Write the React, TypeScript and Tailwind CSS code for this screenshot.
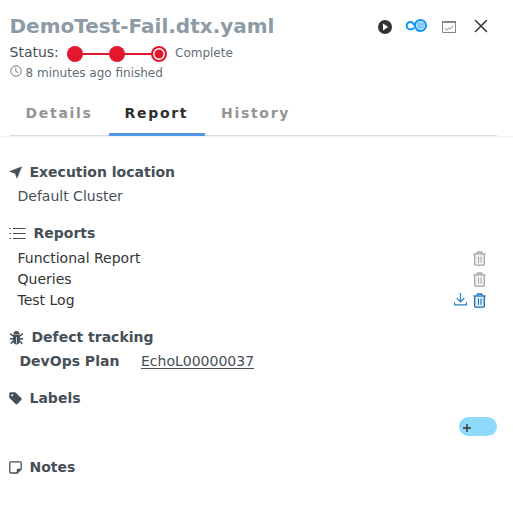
import type { ReactNode } from "react";

function Heading({ icon, children, className }: { icon: ReactNode; children: ReactNode; className: string }) {
  return (
    <h2 className={`flex h-6 items-center text-sm font-bold ${className}`}>
      {icon}
      <span>{children}</span>
    </h2>
  );
}

function Trash({ className }: { className: string }) {
  return (
    <svg className={`mt-px h-[15px] w-[13px] shrink-0 ${className}`} viewBox="0 0 13 15" fill="none" stroke="currentColor">
      <path d="M2 3.5h9V13.5H2z" fill="currentColor" fillOpacity=".12" stroke="none" />
      <path d="M0.3 3h12.4" strokeWidth="1.3" />
      <path d="M4 2.8V2Q4 1 5 1h3Q9 1 9 2v.8" strokeWidth="1.3" />
      <path d="M1.7 3.4V13q0 1.2 1.2 1.2h7.2q1.2 0 1.2-1.2V3.4" strokeWidth="1.3" />
      <path d="M5.5 5.5v6.3M8 5.5v6.3" strokeWidth="1" />
    </svg>
  );
}

function ReportRow({ name, active = false }: { name: string; active?: boolean }) {
  return (
    <li className="flex h-[21px] items-center pl-[17.5px] pr-[27px] text-[#333]">
      <span className="flex-1">{name}</span>
      {active && (
        <svg className="mr-1.5 -mt-px h-[13px] w-[13px] text-[#2782c5]" viewBox="0 0 13 13" fill="none" stroke="currentColor" strokeWidth="1.2">
          <path d="M6.5 0v8.6M2.7 5l3.8 3.8L10.3 5M.6 9.3v2.5h11.8V9.3" />
        </svg>
      )}
      <Trash className={active ? "text-[#136bb6]" : "text-[#a0a4a8]"} />
    </li>
  );
}

export default function App() {
  return (
    <main className="h-[516px] w-[513px] overflow-hidden bg-white font-['DejaVu_Sans',sans-serif] text-sm text-[#464f57]">
      <header className="pl-[10px]">
        <div className="flex h-[42px] items-center pt-[10px]">
          <h1 className="-ml-[0.5px] w-[367.5px] whitespace-nowrap pt-px text-[20px] font-bold text-[#8c9ba5]">DemoTest-Fail.dtx.yaml</h1>
          <svg className="mt-0.5 h-[16px] w-[16px]" viewBox="0 0 16 16">
            <circle cx="8" cy="8" r="7" fill="#333" />
            <path d="M6 4.6v6.8L11.2 8z" fill="#fff" />
          </svg>
          <svg className="mb-px ml-[12px] h-[15px] w-[23px]" viewBox="0 0 23 15" fill="none" stroke="#0796f5">
            <path d="M9 9.6C8 10.8 7 11.5 5.5 11.5A3.8 3.8 0 0 1 5.5 3.9C8.8 3.9 9.3 7 10.8 10c1 2.2 2.5 3 4.7 3A5.5 5.5 0 1 0 10 7.4" strokeWidth="2" />
            <circle cx="15.6" cy="7.5" r="4.4" fill="#a9dafb" stroke="none" />
            <path d="M12.5 6h6.5M12.5 9h6.5M14.3 4.5v6M17.2 4.5v6" stroke="#4eb4f8" strokeWidth=".7" />
          </svg>
          <svg className="ml-[14px] mt-px h-[12px] w-[14px]" viewBox="0 0 14 12" fill="none" stroke="#858585">
            <path d="M.5.5h13v11H.5z" />
            <path d="M0 1h14" strokeWidth="2" />
            <path d="M2.5 7.2l2.2 1.9 2.1-2.2 1.6.9L11.5 4.6" />
          </svg>
          <svg className="ml-[18px] h-[14px] w-[14px]" viewBox="0 0 14 14" stroke="#333" strokeWidth="1.5" strokeLinecap="round">
            <path d="M1.5 1.5l11 11M12.5 1.5l-11 11" />
          </svg>
        </div>
        <div className="flex h-[22px] items-center">
          <span className="-ml-[0.5px] w-[57.5px] pb-0.5">Status:</span>
          <svg className="mt-0.5 h-4 w-[100px]" viewBox="0 0 100 16" fill="#e3172e">
            <path d="M8 7h84v2H8z" />
            <circle cx="8" cy="8" r="8" />
            <circle cx="50" cy="8" r="8" />
            <circle cx="92" cy="8" r="8" />
            <circle cx="92" cy="8" r="5.2" fill="none" stroke="#fff" strokeWidth="1.4" />
          </svg>
          <span className="ml-2 text-xs text-[#5f6f7b]">Complete</span>
        </div>
        <div className="flex h-[18px] items-center text-xs text-[#5f6f7b]">
          <svg className="mb-[4px] mr-[3.5px] h-[12px] w-[12px]" viewBox="0 0 12 12" fill="none" stroke="currentColor" strokeWidth=".9">
            <circle cx="6" cy="6" r="5.2" />
            <path d="M5.8 2.7v3.6l2.4 1.4" />
          </svg>
          <span>8 minutes ago finished</span>
        </div>
      </header>

      <div className="mt-[9px] border-b-2 border-[#f1f6fb]">
        <nav className="ml-[10px] mr-4 flex h-[45px] border-b border-[#d8dee5] text-sm font-bold tracking-[1.7px] text-[#949494]">
          <span className="flex w-[99px] items-center pl-[15.5px]">Details</span>
          <span className="-mb-px flex h-[45px] w-24 items-center border-b-[3px] border-[#5097e8] pl-[15.5px] pt-[2px] text-[#2e2e2e]">Report</span>
          <span className="flex items-center pl-4">History</span>
        </nav>
      </div>

      <Heading className="mt-[22px] pl-[9px]" icon={
        <svg className="mr-[7.5px] h-[13px] w-[13px]" viewBox="0 0 13 13" fill="currentColor"><path d="M12.6.8L8 12.2 6.2 7.4.7 5.4z" stroke="currentColor" strokeWidth=".5" /></svg>
      }>Execution location</Heading>
      <p className="flex h-6 items-center pl-[17.5px]">Default Cluster</p>

      <Heading className="mt-[13px] pl-[9px]" icon={
        <svg className="mr-[7.5px] mt-px h-[13px] w-[17px]" viewBox="0 0 17 13" stroke="currentColor" strokeWidth="1.2">
          <path d="M4 1.5h12.5M4 6.5h12.5M4 11.5h12.5M.5 1.5H2M.5 6.5H2M.5 11.5H2" />
        </svg>
      }>Reports</Heading>
      <ul className="mt-[2px]">
        <ReportRow name="Functional Report" />
        <ReportRow name="Queries" />
        <ReportRow name="Test Log" active />
      </ul>

      <Heading className="mt-[15px] pl-[9px]" icon={
        <svg className="mr-[7.5px] mt-0.5 h-[14px] w-[15px]" viewBox="0 0 15 14" fill="none" stroke="currentColor" strokeWidth="1.5">
          <path d="M4.5 3a3 3 0 0 1 6 0z" fill="currentColor" stroke="none" />
          <path d="M4 3.6h7v5.9c0 5.3-7 5.3-7 0z" fill="currentColor" stroke="none" />
          <path d="M1.2 2.7L4 5M13.8 2.7L11 5M.8 7.7h3.6M14.2 7.7h-3.6M1.7 12.7L4.5 10M13.3 12.7L10.5 10" />
          <path d="M7.5 6v6.5" stroke="#fff" strokeWidth=".7" />
        </svg>
      }>Defect tracking</Heading>
      <div className="flex h-6 items-center pl-[19.5px]">
        <strong className="w-[121.5px]">DevOps Plan</strong>
        <a className="underline underline-offset-2">EchoL00000037</a>
      </div>

      <Heading className="mt-[13px] pl-[9px]" icon={
        <svg className="mr-[7.5px] mt-px h-[13px] w-[13px]" viewBox="0 0 13 13" fill="currentColor">
          <path fillRule="evenodd" d="M.3 1.5Q.3.3 1.5.3h4.7l6 5.8q1 .9 0 1.8L8.4 12q-.9.9-1.8 0L.3 5.8zM3.2 2.2a1 1 0 1 0 0 2 1 1 0 0 0 0-2z" />
        </svg>
      }>Labels</Heading>
      <div className="mt-[7px] flex justify-end pr-4">
        <button className="flex h-[19px] w-[38px] items-center rounded-full bg-[#8fd9fc] pl-1">
          <svg className="mt-0.5 h-2 w-2" viewBox="0 0 8 8" stroke="#333" strokeWidth="1.4"><path d="M4 0v8M0 4h8" /></svg>
        </button>
      </div>

      <Heading className="mt-[19px] pl-[9px]" icon={
        <svg className="mr-[7.5px] mt-px h-[13px] w-[13px]" viewBox="0 0 13 13" fill="none" stroke="currentColor" strokeWidth="1.3">
          <path d="M1.8.8h9.4q1 0 1 1V8l-4 4H1.8q-1 0-1-1V1.8q0-1 1-1z" />
          <path d="M8 12V9q0-1 1-1h3z" fill="currentColor" strokeWidth=".5" />
        </svg>
      }>Notes</Heading>
    </main>
  );
}
